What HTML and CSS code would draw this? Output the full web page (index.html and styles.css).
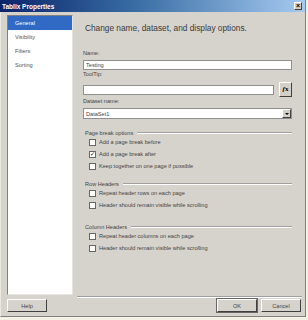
FILE: index.html
```html
<!DOCTYPE html>
<html>
<head>
    <title>Tablix Properties</title>
    <link rel="stylesheet" href="styles.css">
</head>
<body>
    <div class="dialog">
        <div class="titlebar">
            <span>Tablix Properties</span>
            <span class="close">&times;</span>
        </div>

        <div class="content">
            <ul class="nav">
                <li class="active">General</li>
                <li>Visibility</li>
                <li>Filters</li>
                <li>Sorting</li>
            </ul>

            <div class="main">
                <h1>Change name, dataset, and display options.</h1>

                <label class="name-label">Name:</label>
                <div class="input name-input">Testing</div>

                <label class="tip-label">ToolTip:</label>
                <div class="tip-row">
                    <div class="input"></div>
                    <span class="fx-btn"><i>f</i>x</span>
                </div>

                <label class="ds-label">Dataset name:</label>
                <div class="input select">
                    <span>DataSet1</span>
                    <span class="arrow"></span>
                </div>

                <div class="group-title first">Page break options</div>
                <div class="check"><span class="box"></span>Add a page break before</div>
                <div class="check"><span class="box checked">&#10003;</span>Add a page break after</div>
                <div class="check"><span class="box"></span>Keep together on one page if possible</div>

                <div class="group-title rows">Row Headers</div>
                <div class="check"><span class="box"></span>Repeat header rows on each page</div>
                <div class="check"><span class="box"></span>Header should remain visible while scrolling</div>

                <div class="group-title cols">Column Headers</div>
                <div class="check"><span class="box"></span>Repeat header columns on each page</div>
                <div class="check"><span class="box"></span>Header should remain visible while scrolling</div>
            </div>
        </div>

        <div class="footer">
            <button class="btn">Help</button>
            <span class="spacer"></span>
            <button class="btn btn-default">OK</button>
            <button class="btn">Cancel</button>
        </div>
    </div>
</body>
</html>
```

FILE: styles.css
```css
* {
    box-sizing: border-box;
}

body {
    margin: 0;
    background: #f3f1e4;
    font-family: "Liberation Sans", Arial, sans-serif;
    font-size: 5.6px;
    color: #444;
}

.dialog {
    width: 306px;
    height: 317px;
    background: #d6d3cc;
    border-left: 1px solid #ece9e0;
    border-right: 1px solid #808080;
    border-bottom: 1px solid #808080;
    display: flex;
    flex-direction: column;
}

.titlebar {
    height: 12px;
    margin-left: -1px;
    background: linear-gradient(to right, #0a246a, #3a6ea5 45%, #a6caf0);
    display: flex;
    align-items: center;
    justify-content: space-between;
    padding: 0 3px 0 2px;
    color: #fff;
    font-weight: bold;
    font-size: 6.5px;
}

.close {
    width: 8px;
    height: 8px;
    background: #d4d0c8;
    border: 1px solid;
    border-color: #fff #404040 #404040 #fff;
    color: #000;
    font-size: 7px;
    line-height: 5px;
    text-align: center;
}

.content {
    display: flex;
    height: 285px;
    padding-top: 3px;
}

.nav {
    width: 66px;
    height: 280px;
    margin: 0 0 0 6px;
    padding: 0;
    list-style: none;
    background: #fff;
    border: 1px solid;
    border-color: #808080 #e6e4dc #e6e4dc #808080;
}

.nav li {
    height: 14px;
    line-height: 14px;
    padding-left: 7px;
    color: #555;
}

.nav li.active {
    background: #316ac5;
    color: #fff;
}

.main {
    width: 225px;
    height: 282px;
    margin-left: 4px;
    padding: 0 10px 0 6px;
    border-bottom: 1px solid #a0a0a0;
    box-shadow: 0 1px 0 #fff;
}

h1 {
    margin: 8px 0 0;
    padding-left: 2px;
    height: 10px;
    line-height: 11px;
    font-size: 8.3px;
    font-weight: normal;
    color: #3a3a3a;
}

label {
    display: block;
    height: 7px;
    line-height: 7px;
}

.name-label {
    margin-top: 17px;
}

.tip-label,
.ds-label {
    margin-top: 1px;
}

.input {
    height: 10px;
    background: #fff;
    border: 1px solid #8f8f8f;
    padding-left: 2px;
    line-height: 8px;
}

.name-input {
    margin-top: 3px;
}

.tip-row {
    display: flex;
    align-items: center;
    height: 15px;
    margin-top: 4px;
}

.tip-row .input {
    flex: 1;
}

.fx-btn {
    width: 13px;
    height: 15px;
    margin-left: 5px;
    background: #d4d0c8;
    border: 1px solid;
    border-color: #fff #404040 #404040 #fff;
    font-family: "Liberation Serif", serif;
    font-size: 7px;
    font-weight: bold;
    line-height: 13px;
    text-align: center;
    color: #000;
}

.select {
    height: 11px;
    margin-top: 3px;
    display: flex;
    align-items: center;
    justify-content: space-between;
    padding-right: 0;
}

.arrow {
    width: 9px;
    height: 9px;
    background: #d4d0c8;
    border: 1px solid;
    border-color: #fff #404040 #404040 #fff;
    display: flex;
    align-items: center;
    justify-content: center;
}

.arrow::after {
    content: "";
    border-left: 2px solid transparent;
    border-right: 2px solid transparent;
    border-top: 2px solid #000;
}

.group-title {
    display: flex;
    align-items: center;
    height: 7px;
    padding-left: 2px;
}

.group-title::after {
    content: "";
    flex: 1;
    margin-left: 4px;
    border-top: 1px solid #a0a0a0;
    border-bottom: 1px solid #fff;
}

.group-title.first {
    margin-top: 10px;
}

.group-title.rows {
    margin-top: 8px;
}

.group-title.cols {
    margin-top: 12px;
}

.check {
    display: flex;
    align-items: center;
    height: 12px;
    padding-left: 6px;
}

.box {
    width: 7px;
    height: 7px;
    margin-right: 3px;
    background: #fff;
    border: 1px solid #666;
    font-size: 6px;
    line-height: 5px;
    text-align: center;
    color: #000;
}

.footer {
    display: flex;
    gap: 4px;
    height: 19px;
    padding: 2px 4px 0 6px;
}

.spacer {
    flex: 1;
}

.btn {
    width: 40px;
    height: 13px;
    padding: 0;
    background: #d6d3cc;
    border: 1px solid;
    border-color: #fff #404040 #404040 #fff;
    font-family: "Liberation Sans", Arial, sans-serif;
    font-size: 5.6px;
    color: #444;
}

.btn-default {
    box-shadow: 0 0 0 1px #666;
}
```
